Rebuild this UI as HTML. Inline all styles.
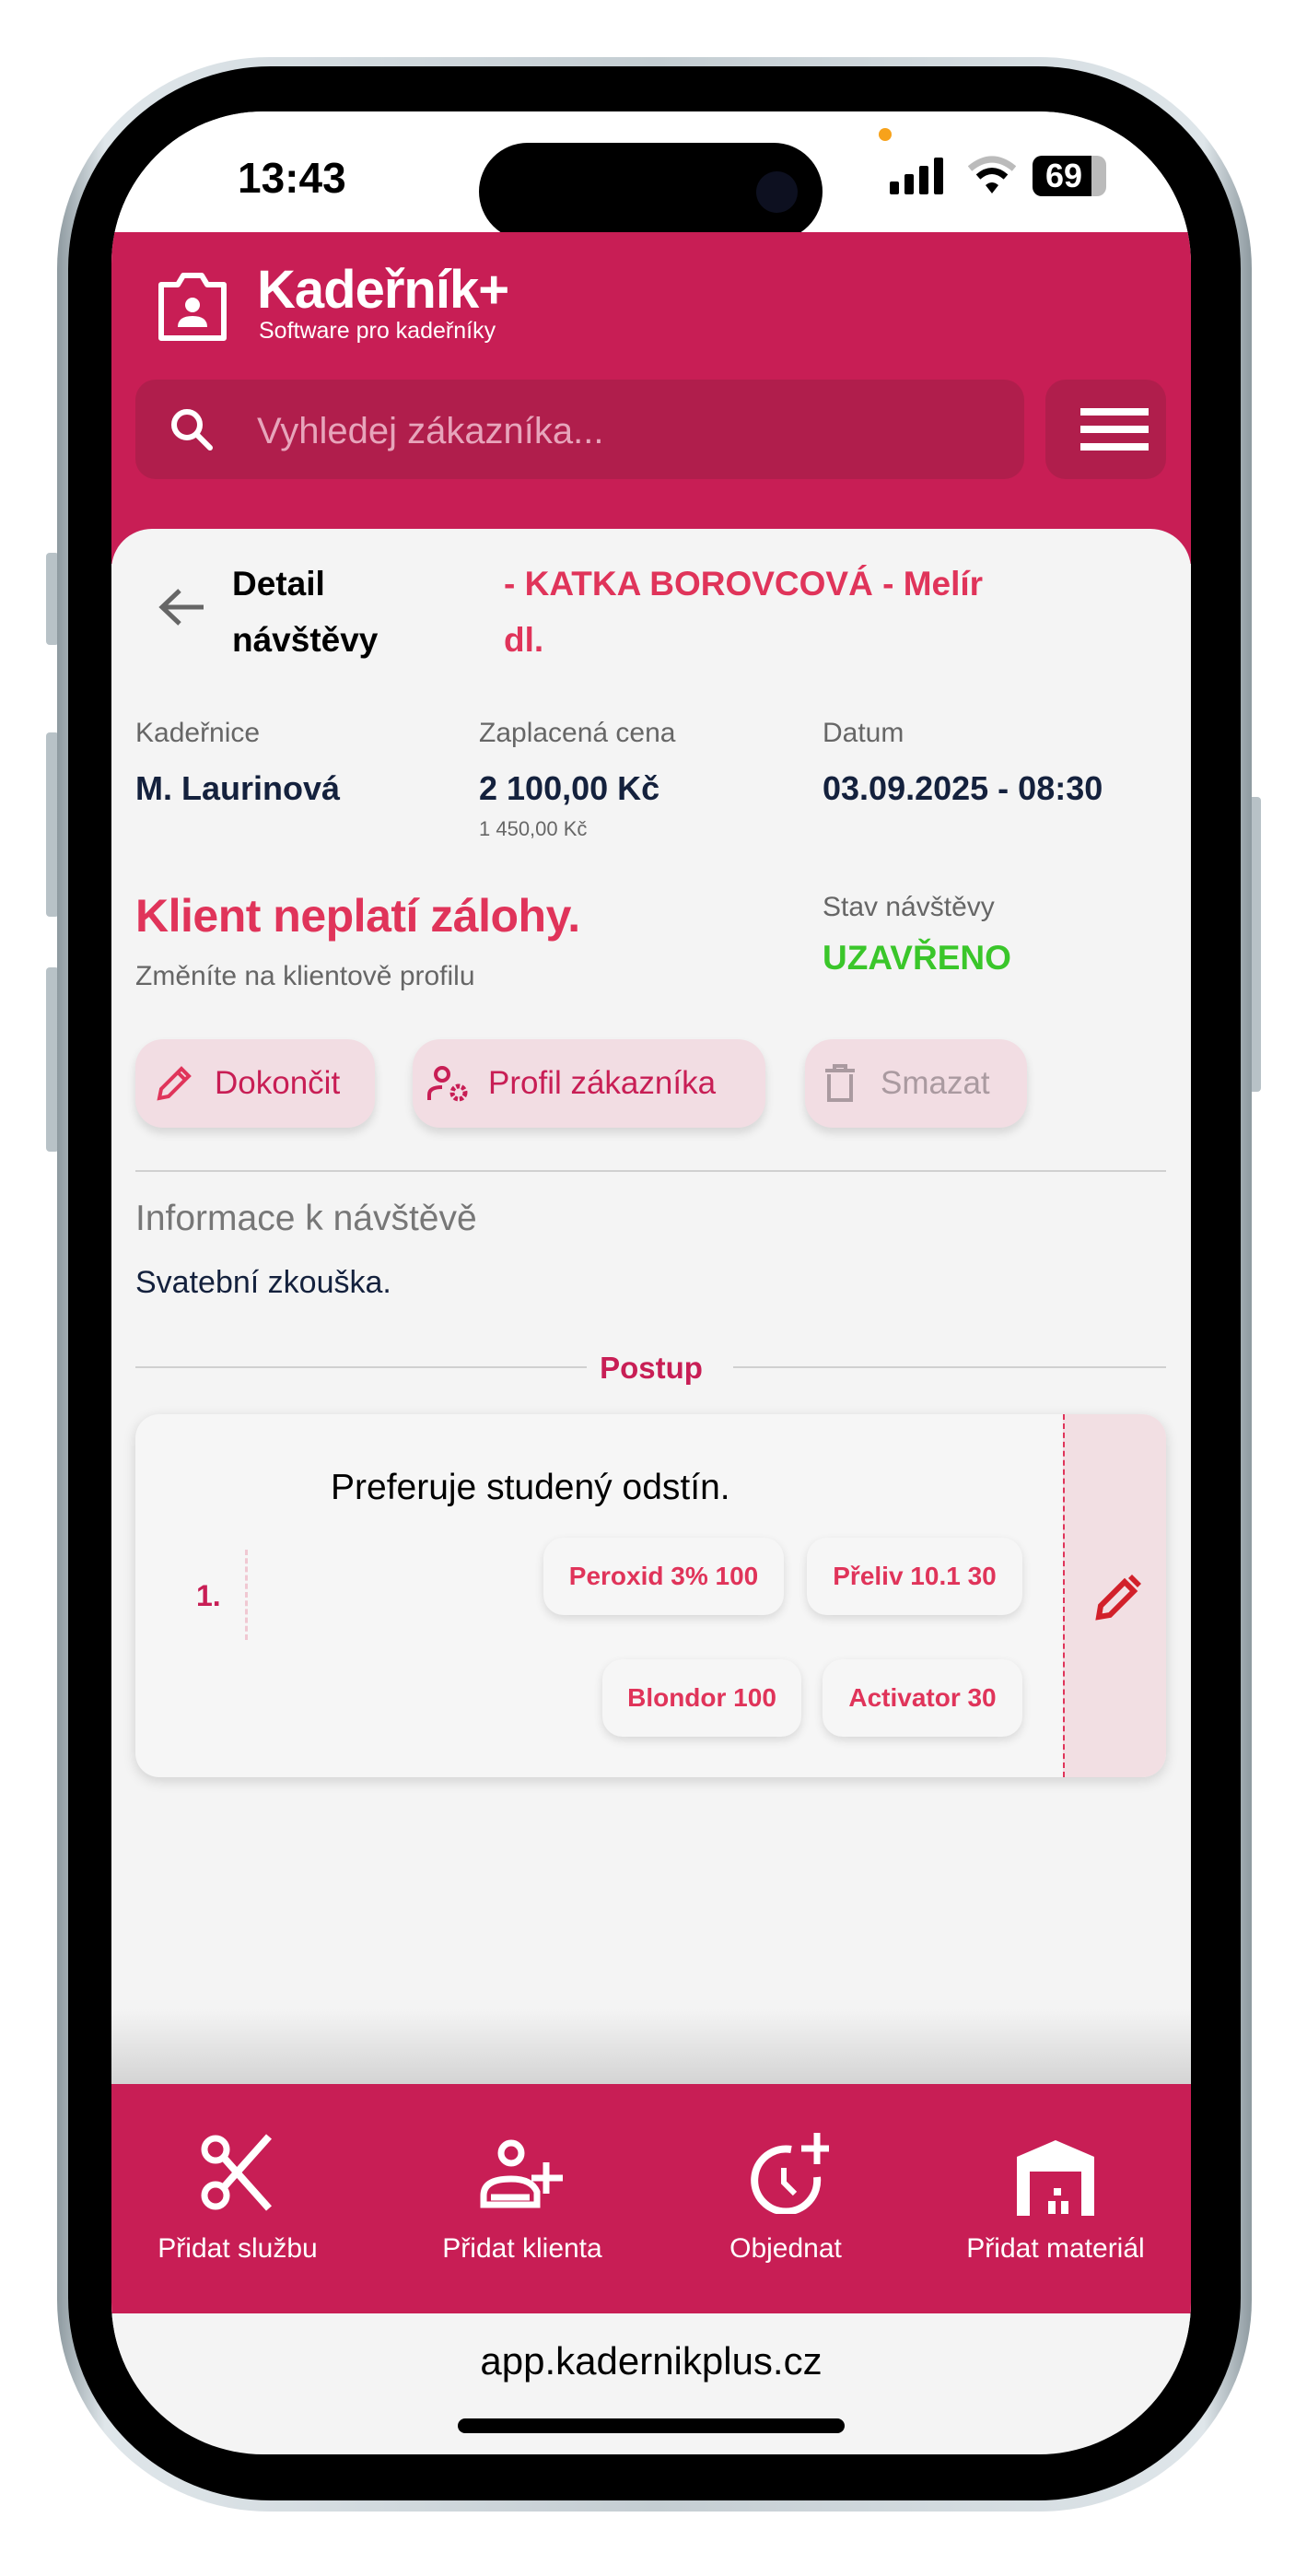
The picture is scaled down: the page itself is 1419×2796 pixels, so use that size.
<!DOCTYPE html>
<html><head><meta charset="utf-8">
<style>
*{margin:0;padding:0;box-sizing:border-box}
body{width:1419px;height:2796px;background:#fff;position:relative;overflow:hidden;font-family:"Liberation Sans",Arial,sans-serif}
.a{position:absolute}
.frame{left:62px;top:62px;width:1297px;height:2664px;border-radius:230px;background:linear-gradient(90deg,#8e9aa0,#dfe6ea 4%,#c4cdd2 50%,#dfe6ea 96%,#8e9aa0)}
.bezel{left:74px;top:72px;width:1273px;height:2642px;border-radius:220px;background:#000}
.screen{left:121px;top:121px;width:1172px;height:2543px;border-radius:165px;background:#f4f4f4;overflow:hidden}
.t{white-space:nowrap}
.btn{top:1007px;height:96px;border-radius:30px;background:#f2dde3;box-shadow:0 6px 10px rgba(0,0,0,.12);display:flex;align-items:center;font-size:35px;color:#c81e55}
.chip{height:84px;border-radius:22px;background:#f6f6f6;box-shadow:0 4px 10px rgba(0,0,0,.12);display:flex;align-items:center;justify-content:center;font-size:28px;font-weight:bold;color:#e0345a}
.lbl{font-size:30px;color:#666}
.val{font-size:36px;font-weight:bold;color:#14213d}
.nav{font-size:30px;color:#fff;text-align:center;width:300px}
</style></head><body>
<div class="a" style="left:50px;top:600px;width:14px;height:100px;background:#b8c2c7;border-radius:4px"></div>
<div class="a" style="left:50px;top:795px;width:14px;height:200px;background:#b8c2c7;border-radius:4px"></div>
<div class="a" style="left:50px;top:1050px;width:14px;height:200px;background:#b8c2c7;border-radius:4px"></div>
<div class="a" style="left:1355px;top:865px;width:14px;height:320px;background:#b8c2c7;border-radius:4px"></div>
<div class="a frame"></div>
<div class="a bezel"></div>
<div class="a screen">
  <div class="a" style="left:0;top:0;width:1172px;height:131px;background:#fff"></div>
  <div class="a t" style="left:137px;top:45px;font-size:46px;font-weight:bold;color:#000">13:43</div>
  <div class="a" style="left:833px;top:18px;width:14px;height:14px;border-radius:50%;background:#f7a21b"></div>
  <svg class="a" style="left:845px;top:50px" width="62" height="40"><rect x="0" y="26" width="10" height="14" rx="2"/><rect x="16" y="18" width="10" height="22" rx="2"/><rect x="32" y="9" width="10" height="31" rx="2"/><rect x="48" y="0" width="10" height="40" rx="2"/></svg>
  <svg class="a" style="left:930px;top:48px" width="52" height="42" viewBox="0 0 52 42"><path d="M2 14 Q26 -6 50 14" stroke="#bbb" stroke-width="7" fill="none"/><path d="M11 23 Q26 10 41 23" stroke="#000" stroke-width="7" fill="none"/><path d="M19 32 L26 41 L33 32 Q26 26 19 32Z"/></svg>
  <div class="a" style="left:1000px;top:48px;width:80px;height:44px;border-radius:10px;background:linear-gradient(90deg,#000 80%,#bbb 80%);color:#fff;font-weight:bold;font-size:36px;line-height:44px;padding-left:14px">69</div>
  <div class="a" style="left:399px;top:34px;width:373px;height:106px;border-radius:53px;background:#000"></div>
  <div class="a" style="left:700px;top:65px;width:45px;height:45px;border-radius:50%;background:#0d1020"></div>
  <div class="a" style="left:0;top:131px;width:1172px;height:360px;background:#c81e55"></div>
  <svg class="a" style="left:48px;top:172px" width="80" height="80" viewBox="0 0 80 80"><path d="M6 16 H24 L30 6 H50 L56 16 H74 V74 H6Z" fill="none" stroke="#fff" stroke-width="6" stroke-linejoin="round"/><circle cx="40" cy="38" r="8" fill="#fff"/><path d="M24 62 Q24 50 40 50 Q56 50 56 62Z" fill="#fff"/></svg>
  <div class="a t" style="left:158px;top:160px;font-size:58px;font-weight:bold;color:#fff;letter-spacing:-1px">Kadeřník+</div>
  <div class="a t" style="left:160px;top:224px;font-size:25px;color:#fff">Software pro kadeřníky</div>
  <div class="a" style="left:26px;top:291px;width:965px;height:108px;border-radius:22px;background:#b01e4c"></div>
  <svg class="a" style="left:62px;top:320px" width="50" height="50" viewBox="0 0 50 50"><circle cx="20" cy="20" r="14" fill="none" stroke="#fff" stroke-width="6"/><path d="M30 30 L45 45" stroke="#fff" stroke-width="6" stroke-linecap="round"/></svg>
  <div class="a t" style="left:158px;top:325px;font-size:40px;color:#e7a5bb">Vyhledej zákazníka...</div>
  <div class="a" style="left:1014px;top:291px;width:131px;height:108px;border-radius:22px;background:#b01e4c"></div>
  <div class="a" style="left:1052px;top:322px;width:74px;height:8px;background:#fff"></div>
  <div class="a" style="left:1052px;top:341px;width:74px;height:8px;background:#fff"></div>
  <div class="a" style="left:1052px;top:360px;width:74px;height:8px;background:#fff"></div>
  <div class="a" style="left:0;top:453px;width:1172px;height:2000px;border-radius:44px 44px 0 0;background:#f4f4f4"></div>
  <svg class="a" style="left:50px;top:516px" width="52" height="44" viewBox="0 0 52 44"><path d="M50 22 H6 M24 4 L5 22 L24 40" fill="none" stroke="#666" stroke-width="5"/></svg>
  <div class="a" style="left:131px;top:482px;font-size:37px;font-weight:bold;color:#000;line-height:61px">Detail<br>návštěvy</div>
  <div class="a" style="left:426px;top:482px;font-size:37px;font-weight:bold;color:#e0345a;line-height:61px;width:620px">- KATKA BOROVCOVÁ - Melír<br>dl.</div>
  <div class="a t lbl" style="left:26px;top:658px">Kadeřnice</div>
  <div class="a t lbl" style="left:399px;top:658px">Zaplacená cena</div>
  <div class="a t lbl" style="left:772px;top:658px">Datum</div>
  <div class="a t val" style="left:26px;top:714px">M. Laurinová</div>
  <div class="a t val" style="left:399px;top:714px">2 100,00 Kč</div>
  <div class="a t val" style="left:772px;top:714px">03.09.2025 - 08:30</div>
  <div class="a t" style="left:399px;top:766px;font-size:22px;color:#666">1 450,00 Kč</div>
  <div class="a t" style="left:26px;top:844px;font-size:50px;font-weight:bold;color:#e0345a;letter-spacing:-.5px">Klient neplatí zálohy.</div>
  <div class="a t lbl" style="left:26px;top:922px">Změníte na klientově profilu</div>
  <div class="a t lbl" style="left:772px;top:847px">Stav návštěvy</div>
  <div class="a t" style="left:772px;top:898px;font-size:37px;font-weight:bold;color:#3ac62a">UZAVŘENO</div>
  <div class="a btn" style="left:26px;width:260px">
    <svg style="margin-left:20px" width="44" height="44" viewBox="0 0 44 44"><path d="M6 38 L8 28 L30 6 L38 14 L16 36Z M26 10 L34 18" fill="none" stroke="#e0345a" stroke-width="4"/></svg>
    <span style="margin-left:22px">Dokončit</span></div>
  <div class="a btn" style="left:327px;width:383px">
    <svg style="margin-left:16px" width="48" height="44" viewBox="0 0 48 44"><circle cx="16" cy="12" r="7" fill="none" stroke="#c81e55" stroke-width="4"/><path d="M2 40 V34 Q2 26 16 26" fill="none" stroke="#c81e55" stroke-width="4"/><circle cx="34" cy="32" r="7" fill="none" stroke="#c81e55" stroke-width="5" stroke-dasharray="4 2"/></svg>
    <span style="margin-left:18px">Profil zákazníka</span></div>
  <div class="a btn" style="left:753px;width:241px;color:#aa9aa0">
    <svg style="margin-left:20px" width="36" height="44" viewBox="0 0 36 44"><path d="M2 8 H34 M12 8 V3 H24 V8 M6 12 V40 H30 V12" fill="none" stroke="#aa9aa0" stroke-width="4"/></svg>
    <span style="margin-left:26px">Smazat</span></div>
  <div class="a" style="left:26px;top:1149px;width:1119px;height:2px;background:#d0d0d0"></div>
  <div class="a t" style="left:26px;top:1180px;font-size:39px;color:#777">Informace k návštěvě</div>
  <div class="a t" style="left:26px;top:1252px;font-size:34px;color:#14213d">Svatební zkouška.</div>
  <div class="a" style="left:26px;top:1362px;width:490px;height:2px;background:#d0d0d0"></div>
  <div class="a" style="left:675px;top:1362px;width:470px;height:2px;background:#d0d0d0"></div>
  <div class="a t" style="left:516px;top:1345px;font-size:33px;font-weight:bold;color:#c81e55;width:140px;text-align:center">Postup</div>
  <div class="a" style="left:26px;top:1414px;width:1119px;height:394px;border-radius:26px;background:#f6f6f6;box-shadow:0 4px 14px rgba(0,0,0,.15);overflow:hidden">
    <div class="a" style="left:1007px;top:0;width:112px;height:394px;background:#f2dfe3;border-left:2px dashed #e0345a"></div>
  </div>
  <div class="a t" style="left:238px;top:1472px;font-size:39px;color:#000">Preferuje studený odstín.</div>
  <div class="a t" style="left:92px;top:1593px;font-size:32px;font-weight:bold;color:#c81e55">1.</div>
  <div class="a" style="left:145px;top:1561px;width:0;height:98px;border-left:3px dashed #f0c8d2"></div>
  <div class="a chip" style="left:469px;top:1548px;width:261px">Peroxid 3% 100</div>
  <div class="a chip" style="left:755px;top:1548px;width:234px">Přeliv 10.1 30</div>
  <div class="a chip" style="left:533px;top:1680px;width:216px">Blondor 100</div>
  <div class="a chip" style="left:772px;top:1680px;width:217px">Activator 30</div>
  <svg class="a" style="left:1066px;top:1586px" width="54" height="54" viewBox="0 0 54 54"><path d="M6 48 L8 36 L34 10 L44 20 L18 46Z" fill="none" stroke="#d2202a" stroke-width="6"/><path d="M38 6 L42 2 L52 12 L48 16Z" fill="#d2202a"/></svg>
  <div class="a" style="left:0;top:2059px;width:1172px;height:82px;background:linear-gradient(#f4f4f4,#d4d4d4)"></div>
  <div class="a" style="left:0;top:2141px;width:1172px;height:249px;background:#c81e55"></div>
  <svg class="a" style="left:95px;top:2194px" width="84" height="86" viewBox="0 0 84 86"><circle cx="18" cy="18" r="12" fill="none" stroke="#fff" stroke-width="7"/><circle cx="18" cy="68" r="12" fill="none" stroke="#fff" stroke-width="7"/><path d="M27 27 L76 82 M27 59 L76 4" stroke="#fff" stroke-width="8"/></svg>
  <svg class="a" style="left:400px;top:2200px" width="92" height="78" viewBox="0 0 92 78"><circle cx="34" cy="16" r="11" fill="none" stroke="#fff" stroke-width="7"/><path d="M4 72 V62 Q4 44 34 44 Q56 44 62 58 V72Z M12 64 H54" fill="none" stroke="#fff" stroke-width="7"/><path d="M72 26 V60 M56 43 H90" stroke="#fff" stroke-width="7"/></svg>
  <svg class="a" style="left:690px;top:2188px" width="90" height="94" viewBox="0 0 90 94"><path d="M48 24 A34 34 0 1 0 76 54" fill="none" stroke="#fff" stroke-width="8"/><path d="M40 44 V60 L52 72" fill="none" stroke="#fff" stroke-width="6"/><path d="M76 6 V40 M59 23 H89" stroke="#fff" stroke-width="7"/></svg>
  <svg class="a" style="left:983px;top:2202px" width="84" height="82" viewBox="0 0 84 82"><path d="M0 18 L42 0 L84 18 V82 H0Z" fill="#fff"/><rect x="14" y="34" width="56" height="48" fill="#c81e55"/><rect x="40" y="52" width="8" height="8" fill="#fff"/><rect x="34" y="66" width="8" height="14" fill="#fff"/><rect x="48" y="66" width="8" height="14" fill="#fff"/></svg>
  <div class="a t nav" style="left:-13px;top:2303px">Přidat službu</div>
  <div class="a t nav" style="left:296px;top:2303px">Přidat klienta</div>
  <div class="a t nav" style="left:582px;top:2303px">Objednat</div>
  <div class="a t nav" style="left:875px;top:2303px">Přidat materiál</div>
  <div class="a t" style="left:0;top:2418px;width:1172px;text-align:center;font-size:42px;color:#000">app.kadernikplus.cz</div>
  <div class="a" style="left:376px;top:2504px;width:420px;height:16px;border-radius:8px;background:#000"></div>
</div>
</body></html>
